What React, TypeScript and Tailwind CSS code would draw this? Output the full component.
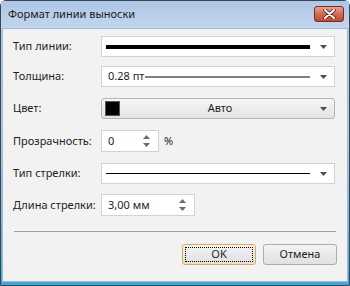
import React from "react";

const font = { fontFamily: '"Noto Sans", "Open Sans", sans-serif' };

function Arrow() {
  return (
    <svg width="7" height="4" viewBox="0 0 7 4" className="shrink-0">
      <path d="M0 0 H7 L3.5 4 Z" fill="#4d4d4d" />
    </svg>
  );
}

function Spin() {
  return (
    <div className="flex flex-col items-center gap-[4px]">
      <svg width="7" height="4" viewBox="0 0 7 4">
        <path d="M0 4 H7 L3.5 0 Z" fill="#6a6a6a" />
      </svg>
      <svg width="7" height="4" viewBox="0 0 7 4">
        <path d="M0 0 H7 L3.5 4 Z" fill="#6a6a6a" />
      </svg>
    </div>
  );
}

function Row({ label, className, children }: { label: string; className?: string; children: React.ReactNode }) {
  return (
    <div className={"flex h-[21px] items-center " + (className ?? "")}>
      <div className="w-[88px] shrink-0 whitespace-nowrap text-[11px] text-[#1e1e1e]">{label}</div>
      {children}
    </div>
  );
}

export default function App() {
  return (
    <div className="h-[286px] w-[350px] overflow-hidden bg-white" style={font}>
      <div className="flex h-full w-full flex-col rounded-t-[6px] border border-[#3a4654] bg-gradient-to-b from-[#b7cde8] via-[#a9c8e8] to-[#3aa8de]">
        {/* title bar */}
        <div className="flex h-[27px] shrink-0 items-center justify-between bg-gradient-to-b from-[#aec6e5] to-[#c2d6ee] pl-[7px] pr-[5px]">
          <span className="text-[11px] text-[#1a1a1a]">Формат линии выноски</span>
          <div className="mb-[2px] flex h-[16px] w-[30px] items-center justify-center rounded-[3px] border border-[#7a2a20] bg-gradient-to-b from-[#e7a494] via-[#d06a55] to-[#c44a30]">
            <svg width="13" height="10" viewBox="0 0 13 10">
              <path d="M2 1 L11 9 M11 1 L2 9" stroke="#5a2018" strokeWidth="3.6" strokeLinecap="round" />
              <path d="M2 1 L11 9 M11 1 L2 9" stroke="#ffffff" strokeWidth="2" strokeLinecap="round" />
            </svg>
          </div>
        </div>

        {/* client area */}
        <div className="mx-[1px] mb-[3px] flex flex-1 flex-col border border-[#9fb8d4] bg-[#f2f2f2] pl-[10px] pr-[10px] pt-[7px]">
          <Row label="Тип линии:">
            <div className="flex h-[21px] w-[234px] items-center border border-[#d2d2d2] bg-white pl-[4px] pr-[7px]">
              <div className="h-[4px] flex-1 bg-black" />
              <div className="ml-[10px]">
                <Arrow />
              </div>
            </div>
          </Row>
          <Row label="Толщина:" className="mt-[9px]">
            <div className="flex h-[21px] w-[234px] items-center border border-[#d2d2d2] bg-white pl-[6px] pr-[7px]">
              <span className="text-[11px] text-[#1e1e1e]">0.28 пт</span>
              <div className="ml-[1px] h-[2px] flex-1 bg-[#808080]" />
              <div className="ml-[10px]">
                <Arrow />
              </div>
            </div>
          </Row>
          <Row label="Цвет:" className="mt-[11px]">
            <div className="flex h-[21px] w-[234px] items-center rounded-[3px] border border-[#b4b4b4] bg-gradient-to-b from-[#f6f6f6] to-[#e3e3e3] pl-[3px] pr-[7px]">
              <div className="h-[15px] w-[15px] border border-[#555] bg-black" />
              <span className="flex-1 text-center text-[11px] text-[#1e1e1e]">Авто</span>
              <Arrow />
            </div>
          </Row>
          <div className="mt-[11px] flex h-[22px] items-center">
            <div className="w-[88px] shrink-0 whitespace-nowrap text-[11px] text-[#1e1e1e]">Прозрачность:</div>
            <div className="flex h-[22px] w-[58px] items-center border border-[#d2d2d2] bg-white pl-[6px] pr-[8px]">
              <span className="flex-1 text-[11px] text-[#1e1e1e]">0</span>
              <Spin />
            </div>
            <span className="ml-[5px] text-[11px] text-[#1e1e1e]">%</span>
          </div>
          <Row label="Тип стрелки:" className="mt-[11px]">
            <div className="flex h-[21px] w-[234px] items-center border border-[#d2d2d2] bg-white pl-[4px] pr-[7px]">
              <div className="h-[1px] flex-1 bg-black" />
              <div className="ml-[10px]">
                <Arrow />
              </div>
            </div>
          </Row>
          <div className="mt-[10px] flex h-[22px] items-center">
            <div className="w-[88px] shrink-0 whitespace-nowrap text-[11px] text-[#1e1e1e]">Длина стрелки:</div>
            <div className="flex h-[22px] w-[94px] items-center border border-[#d2d2d2] bg-white pl-[6px] pr-[8px]">
              <span className="flex-1 text-[11px] text-[#1e1e1e]">3,00 мм</span>
              <Spin />
            </div>
          </div>

          <div className="ml-[1px] mr-[1px] mt-[15px] h-[1px] bg-[#a0a0a0]" />

          <div className="mt-[12px] flex justify-end gap-[7px]">
            <button className="flex h-[21px] w-[74px] items-center justify-center rounded-[3px] border border-[#e8a64a] bg-gradient-to-b from-[#f4f4f4] to-[#e0e0e0] p-[2px]">
              <span className="flex h-full w-full items-center justify-center border border-dotted border-black text-[11px] text-[#1e1e1e]">
                OK
              </span>
            </button>
            <button className="flex h-[21px] w-[74px] items-center justify-center rounded-[3px] border border-[#acacac] bg-gradient-to-b from-[#f4f4f4] to-[#e0e0e0] text-[11px] text-[#1e1e1e]">
              Отмена
            </button>
          </div>
        </div>
      </div>
    </div>
  );
}
